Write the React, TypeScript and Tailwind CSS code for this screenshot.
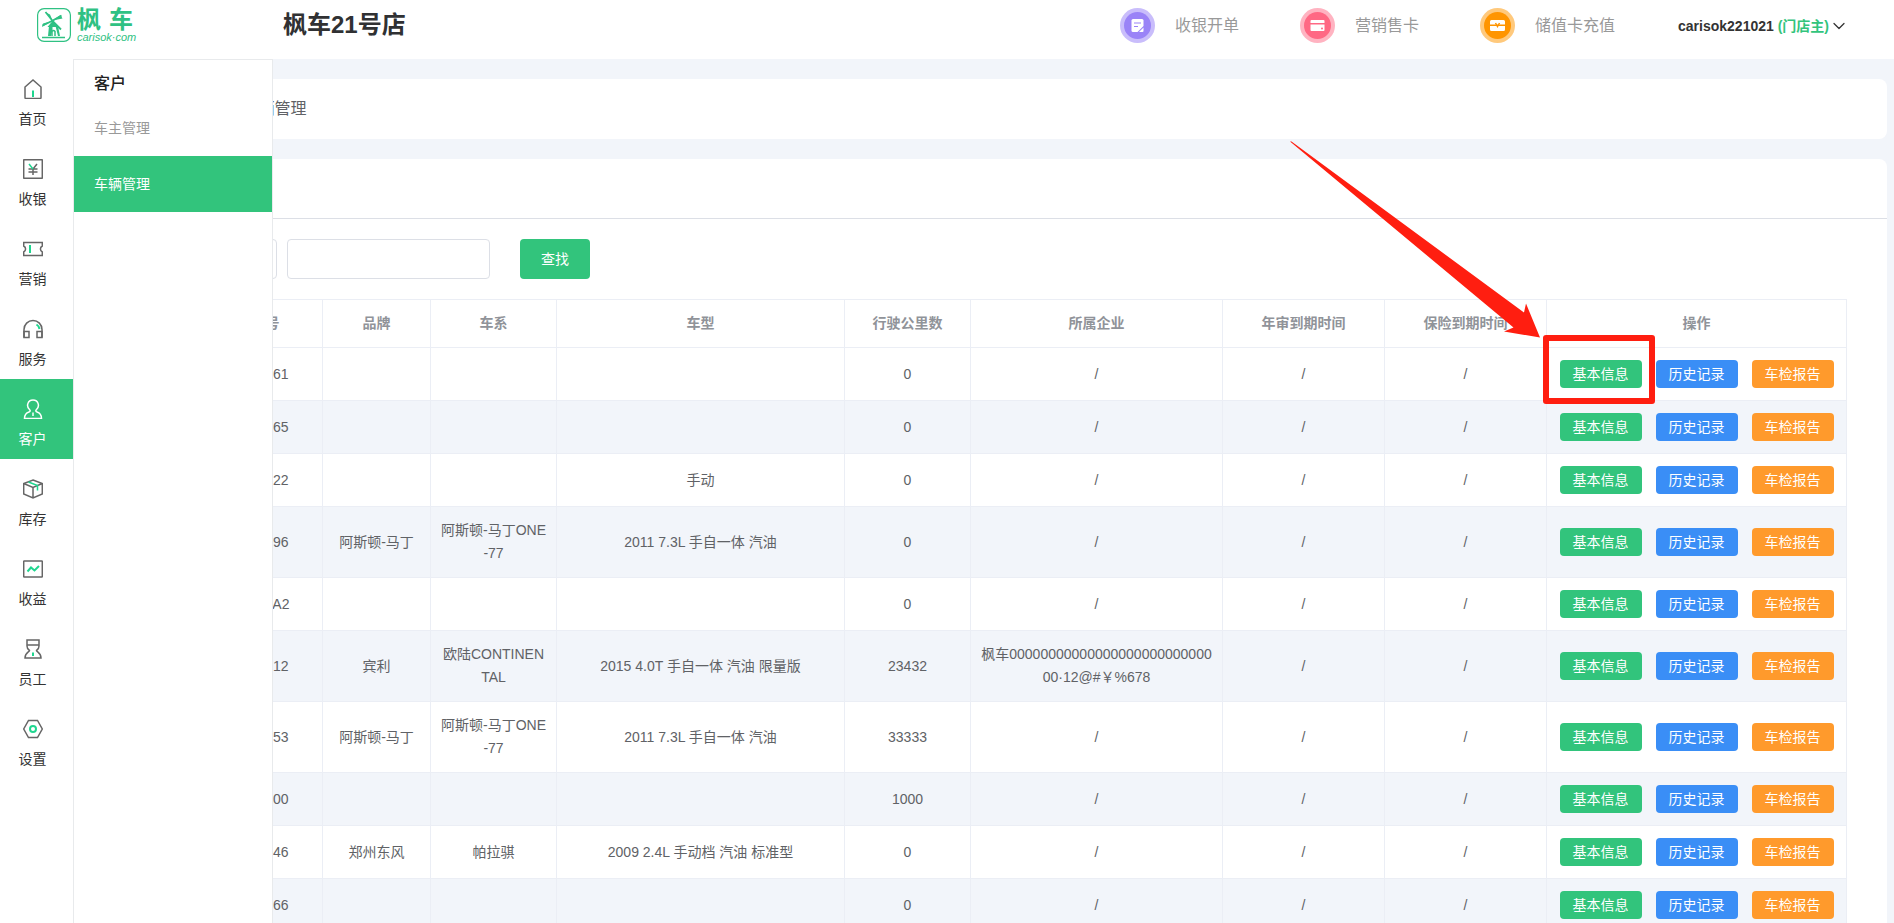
import type { ReactNode } from "react";
import { ChevronDown } from "lucide-react";

const G = "#1fd68f";

const menu: { label: string; icon: ReactNode }[] = [
  {
    label: "首页",
    icon: (
      <>
        <path d="M2 8 10 1l8 7v10.500q0 1-1 1H3q-1 0-1-1z" />
        <path d="M10 11.500V18" stroke={G} strokeWidth="2" />
      </>
    ),
  },
  {
    label: "收银",
    icon: (
      <>
        <rect x="0.700" y="0.700" width="18.600" height="18.600" rx="0.500" />
        <path d="M14 5l-4 5v6M5.500 10h9M5.500 13h9" />
        <path d="M6 5l4 5" stroke={G} />
      </>
    ),
  },
  {
    label: "营销",
    icon: (
      <>
        <path d="M0.700 3.500h18.600v3.500c-2.500 1.500-2.500 4.500 0 6v3.500H0.700V13c2.500-1.500 2.500-4.500 0-6z" />
        <path d="M7 6v8" stroke={G} strokeWidth="2" />
      </>
    ),
  },
  {
    label: "服务",
    icon: (
      <>
        <path d="M1 18.500V10.500a9 9 0 0 1 18 0v8" />
        <rect x="1" y="12.500" width="5" height="6" />
        <rect x="14" y="12.500" width="5" height="6" />
        <path d="M13.500 5.500q2.500 1.500 3 4.500" stroke={G} strokeWidth="2" />
      </>
    ),
  },
  {
    label: "客户",
    icon: (
      <>
        <path d="M6.500 10.500C3 7.500 4.500 1 10 1s7 6.500 3.500 9.500c-1 1-1 2 .5 2.500 3 1 4.500 2.500 4.500 6.500h-17c0-4 1.500-5.500 4.500-6.500 1.500-.5 1.500-1.500.5-2.500z" />
        <path d="M10 13.500V17" />
      </>
    ),
  },
  {
    label: "库存",
    icon: (
      <>
        <path d="M10 1 19.300 4.500v10.500L10 19 0.700 15V4.500zM0.700 4.500 10 8.500l9.300-4M10 8.500V19" />
        <path d="M5.500 3l9 3.500v5" stroke={G} />
      </>
    ),
  },
  {
    label: "收益",
    icon: (
      <>
        <rect x="0.700" y="2" width="18.600" height="16" rx="0.500" />
        <path d="M4.500 12.500 8 8.500l3.500 3L16 7" stroke={G} strokeWidth="2" />
      </>
    ),
  },
  {
    label: "员工",
    icon: (
      <>
        <path d="M4 1h12v6q0 3-2.500 4.500c0 1.500 4.500 2 4.500 7.500H2c0-5.500 4.500-6 4.500-7.500Q4 10 4 7zM4 6h12" />
        <path d="M10 13.500V17" stroke={G} strokeWidth="2" />
      </>
    ),
  },
  {
    label: "设置",
    icon: (
      <>
        <path d="M5.500 1.500h9L19.300 10l-4.800 8.500h-9L0.700 10z" />
        <circle cx="10" cy="10" r="3" stroke={G} strokeWidth="2" />
      </>
    ),
  },
];

const columns = [
  { title: "序号", width: "w-[77px]" },
  { title: "车牌号", width: "w-[128px]" },
  { title: "品牌", width: "w-[108px]" },
  { title: "车系", width: "w-[126px]" },
  { title: "车型", width: "w-[288px]" },
  { title: "行驶公里数", width: "w-[126px]" },
  { title: "所属企业", width: "w-[252px]" },
  { title: "年审到期时间", width: "w-[162px]" },
  { title: "保险到期时间", width: "w-[162px]" },
  { title: "操作", width: "w-[300px]" },
];

const rows = [
  ["粤J12161", "", "", "", "0", "/"],
  ["粤J12665", "", "", "", "0", "/"],
  ["粤J12122", "", "", "手动", "0", "/"],
  ["粤J12196", "阿斯顿-马丁", "阿斯顿-马丁ONE-77", "2011 7.3L 手自一体 汽油", "0", "/"],
  ["粤J11AA2", "", "", "", "0", "/"],
  ["粤J12212", "宾利", "欧陆CONTINENTAL", "2015 4.0T 手自一体 汽油 限量版", "23432", "枫车0000000000000000000000000000·12@#￥%678"],
  ["粤J12653", "阿斯顿-马丁", "阿斯顿-马丁ONE-77", "2011 7.3L 手自一体 汽油", "33333", "/"],
  ["粤J12100", "", "", "", "1000", "/"],
  ["粤J12646", "郑州东风", "帕拉骐", "2009 2.4L 手动档 汽油 标准型", "0", "/"],
  ["粤J12166", "", "", "", "0", "/"],
];

const actions = [
  { label: "基本信息", color: "bg-[#32c47c]" },
  { label: "历史记录", color: "bg-[#3a8ef6]" },
  { label: "车检报告", color: "bg-[#ff9a2c]" },
];

function Logo() {
  return (
    <a href="#" className="flex items-start gap-1.5 text-[#2fc183]">
      <svg viewBox="0 0 34 34" className="w-[34px] h-[34px]" fill="none" stroke="currentColor">
        <rect x="0.600" y="0.600" width="32.800" height="32.800" rx="6.500" strokeWidth="1.200" />
        {/* sails */}
        <path d="M8.500 4 16 13.500 24 21.500M5.500 17.500 15 13l9.500-5.500" strokeWidth="1.800" />
        <path d="M8 4l5 2.500 2.500 6zM5 19l1-3.500 9-2.500zM25.500 10.500 23.500 7l-8 5.500z" fill="currentColor" stroke="none" />
        {/* tower */}
        <path d="M10.500 19 15.500 13l6.500 6z" fill="currentColor" stroke="none" />
        <path d="M12 18h3.500v4L14 28h-3zM18.500 18h2.500l2 10h-2z" fill="currentColor" stroke="none" />
        <path d="M15 28v-4.500q1.500-2 3 0V28M5 29.500h23" strokeWidth="1.500" />
      </svg>
      <span className="flex flex-col">
        <span className="flex gap-2 text-2xl leading-6 font-bold">
          <span>枫</span>
          <span>车</span>
        </span>
        <span className="text-[11px] leading-[11px] italic">carisok·com</span>
      </span>
    </a>
  );
}

function Header() {
  return (
    <header className="h-[59px] shrink-0 flex items-start bg-white pl-[37px] pr-[45px] pt-2">
      <div className="w-[246px]">
        <Logo />
      </div>
      <h1 className="text-2xl leading-[34px] font-bold text-[#303133]">枫车21号店</h1>
      <nav className="ml-auto h-[35px] flex items-center gap-[61px] text-base text-[#999999]">
        <a href="#" className="flex items-center gap-5">
          <svg viewBox="0 0 35 35" className="w-[35px] h-[35px]">
            <circle cx="17.500" cy="17.500" r="17.500" fill="#c9bdfb" />
            <circle cx="17.500" cy="17.500" r="13.500" fill="#9a83f7" />
            <path d="M13 11h9q1.500 0 1.500 1.500V18l-6 6H13q-1.500 0-1.500-1.500v-10Q11.500 11 13 11z" fill="#fff" />
            <path d="M14 15h7M14 18.500h4" stroke="#9a83f7" />
            <path d="M23.500 19.500V23q0 1-1 1h-3.500z" fill="#fff" />
          </svg>
          收银开单
        </a>
        <a href="#" className="flex items-center gap-5">
          <svg viewBox="0 0 35 35" className="w-[35px] h-[35px]">
            <circle cx="17.500" cy="17.500" r="17.500" fill="#ffb3c1" />
            <circle cx="17.500" cy="17.500" r="13.500" fill="#ff6884" />
            <path d="M11.500 12h12q1 0 1 1v2h-14v-2q0-1 1-1zM10.500 16.500h14v5.500q0 1-1 1h-12q-1 0-1-1z" fill="#fff" />
            <circle cx="22" cy="20.500" r="1" fill="#ff6884" />
          </svg>
          营销售卡
        </a>
        <a href="#" className="flex items-center gap-5">
          <svg viewBox="0 0 35 35" className="w-[35px] h-[35px]">
            <circle cx="17.500" cy="17.500" r="17.500" fill="#ffc97c" />
            <circle cx="17.500" cy="17.500" r="13.500" fill="#ff9500" />
            <path d="M11.500 12h12q1.500 0 1.500 1.500v3H10v-3q0-1.500 1.500-1.500zM10 18h15v3.500q0 1.500-1.500 1.500h-12q-1.500 0-1.500-1.500z" fill="#fff" />
            <path d="M15.500 15l2 3.500 2-3.500" fill="none" stroke="#ff9500" strokeWidth="1.500" />
          </svg>
          储值卡充值
        </a>
      </nav>
      <button className="ml-[63px] h-[35px] flex items-center text-sm font-bold text-[#333333]">
        carisok221021&nbsp;<span className="text-[#32c47c]">(门店主)</span>
        <ChevronDown className="w-5 h-5" strokeWidth={1.5} />
      </button>
    </header>
  );
}

function Sidebar() {
  return (
    <aside className="relative z-10 w-[73px] shrink-0 bg-white">
      <nav>
        {menu.map((m) => (
          <a
            key={m.label}
            href="#"
            className={`h-20 pr-2 pt-5 flex flex-col items-center gap-2.5 text-sm ${m.label === "客户" ? "bg-[#32c47c] text-white" : "text-[#333333]"}`}
          >
            <svg viewBox="0 0 20 20" className={`w-5 h-5 ${m.label === "客户" ? "text-white" : "text-[#666666]"}`} fill="none" stroke="currentColor" strokeWidth="1.500">
              {m.icon}
            </svg>
            {m.label}
          </a>
        ))}
      </nav>

      {/* second level menu, opens over the page */}
      <div className="absolute left-full top-0 h-full w-[200px] bg-white border-x border-t border-[#e8eaec] text-sm">
        <h2 className="h-10 pl-5 pt-3 text-base leading-6 font-medium text-[#222222]">客户</h2>
        <a href="#" className="h-14 pl-5 flex items-center text-[#999999]">车主管理</a>
        <a href="#" className="h-14 pl-5 flex items-center bg-[#32c47c] text-white">车辆管理</a>
      </div>
    </aside>
  );
}

function VehicleTable() {
  return (
    <table className="mt-5 w-full table-fixed border-separate border-spacing-0 border-t border-l border-[#ebeef5] text-sm leading-[23px] text-center text-[#606266]">
      <thead>
        <tr className="h-12 text-[#909399]">
          {columns.map((c) => (
            <th key={c.title} className={`${c.width} border-r border-b border-[#ebeef5] font-bold`}>{c.title}</th>
          ))}
        </tr>
      </thead>
      <tbody>
        {rows.map((r, i) => (
          <tr key={i} className="even:bg-[#f2f5fa]">
            {[String(i + 1), ...r, "/", "/"].map((text, j) => (
              <td key={j} className="px-2 py-3 border-r border-b border-[#ebeef5] break-all">{text}</td>
            ))}
            <td className="py-3 border-r border-b border-[#ebeef5]">
              <div className="flex justify-center gap-3.5">
                {actions.map((a) => (
                  <button key={a.label} className={`w-[82px] h-7 rounded text-white ${a.color}`}>{a.label}</button>
                ))}
              </div>
            </td>
          </tr>
        ))}
      </tbody>
    </table>
  );
}

// arrow and frame that point at the first 基本信息 button
function Pointer() {
  return (
    <svg viewBox="0 0 370 270" className="absolute top-20 right-[235px] w-[370px] h-[270px] pointer-events-none">
      <path d="M1 2.500 2.500 2.500 235 173.500l2-9 14 34-36-6 9.500-4z" fill="#ff1e10" />
      <rect x="257" y="199" width="106" height="63" fill="none" stroke="#ff1e10" strokeWidth="6" strokeLinejoin="round" />
    </svg>
  );
}

export default function App() {
  return (
    <div className="h-screen flex flex-col overflow-hidden bg-white font-['Liberation_Sans','Noto_Sans_CJK_SC',sans-serif]">
      <Header />
      <div className="flex-1 min-h-0 flex">
        <Sidebar />
        <main className="relative flex-1 min-w-0 flex flex-col gap-5 bg-[#f2f5fa] pt-5 pl-5 pr-[7px] overflow-hidden">
          <div className="h-[60px] shrink-0 flex items-center gap-1.5 rounded-lg bg-white pl-[21px] text-base text-[#606266]">
            <span>当前位置：客户</span>
            <span>/</span>
            <span>车辆管理</span>
          </div>

          <section className="rounded-lg bg-white">
            <div className="h-[60px] border-b border-[#dcdfe6]" />
            <div className="pl-6 pr-10 pt-5 pb-5">
              <form className="flex items-center">
                <select aria-label="搜索条件" className="w-40 h-10 px-3 rounded border border-[#dcdfe6] text-sm text-[#606266]">
                  <option>车牌号</option>
                </select>
                <input aria-label="关键字" className="ml-2.5 w-[203px] h-10 px-3 rounded border border-[#dcdfe6] text-sm" />
                <button type="button" className="ml-[30px] w-[70px] h-10 rounded bg-[#32c47c] text-sm text-white">查找</button>
              </form>
              <VehicleTable />
            </div>
          </section>

          <Pointer />
        </main>
      </div>
    </div>
  );
}
